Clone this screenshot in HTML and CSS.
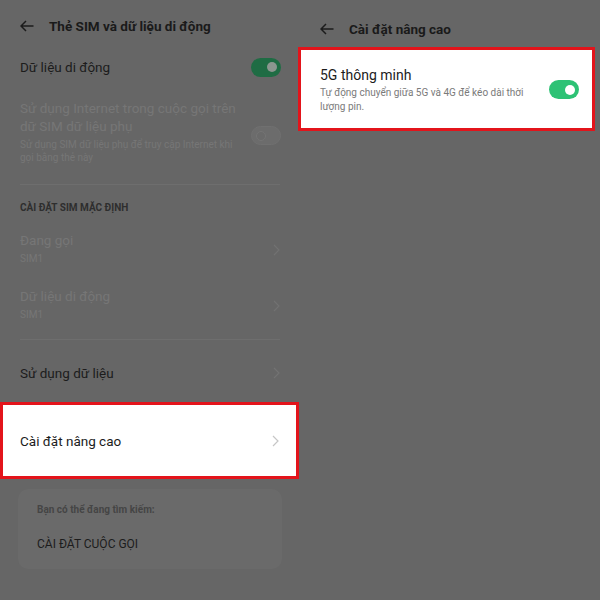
FILE: index.html
```html
<!DOCTYPE html>
<html lang="vi">
<head>
    <meta charset="UTF-8">
    <meta name="viewport" content="width=device-width, initial-scale=1.0">
    <title>Thẻ SIM và dữ liệu di động</title>
    <link rel="stylesheet" href="styles.css">
</head>
<body>
    <div class="screens">
        <!-- Màn hình 1: Thẻ SIM -->
        <div class="screen left">
            <div class="header">
                <svg class="back" width="14" height="12" viewBox="0 0 14 12"><path d="M13.5 6H1M6 1L1 6l5 5" fill="none" stroke="#1c1c1c" stroke-width="1.5"/></svg>
                <span class="title">Thẻ SIM và dữ liệu di động</span>
            </div>

            <div class="row switch-row">
                <span class="label">Dữ liệu di động</span>
                <span class="toggle on-dim"><span class="knob"></span></span>
            </div>

            <div class="row disabled-row">
                <div class="text">
                    <div class="label faded">Sử dụng Internet trong cuộc gọi trên dữ SIM dữ liệu phụ</div>
                    <div class="sub faded">Sử dụng SIM dữ liệu phụ để truy cập Internet khi gọi bằng thẻ này</div>
                </div>
                <span class="toggle off-dim"><span class="knob"></span></span>
            </div>

            <div class="divider"></div>

            <div class="section">CÀI ĐẶT SIM MẶC ĐỊNH</div>

            <div class="row item">
                <div class="text">
                    <div class="label faded">Đang gọi</div>
                    <div class="sub faded">SIM1</div>
                </div>
                <svg class="chev" width="7" height="12" viewBox="0 0 7 12"><path d="M1 1l5 5-5 5" fill="none" stroke="#727272" stroke-width="1.2"/></svg>
            </div>
            <div class="row item">
                <div class="text">
                    <div class="label faded">Dữ liệu di động</div>
                    <div class="sub faded">SIM1</div>
                </div>
                <svg class="chev" width="7" height="12" viewBox="0 0 7 12"><path d="M1 1l5 5-5 5" fill="none" stroke="#727272" stroke-width="1.2"/></svg>
            </div>

            <div class="divider second"></div>

            <div class="row usage">
                <span class="label">Sử dụng dữ liệu</span>
                <svg class="chev" width="7" height="12" viewBox="0 0 7 12"><path d="M1 1l5 5-5 5" fill="none" stroke="#737373" stroke-width="1.2"/></svg>
            </div>

            <div class="row highlight advanced">
                <span class="label">Cài đặt nâng cao</span>
                <svg class="chev" width="7" height="12" viewBox="0 0 7 12"><path d="M1 1l5 5-5 5" fill="none" stroke="#c6c6c6" stroke-width="1.2"/></svg>
            </div>

            <div class="suggest">
                <div class="suggest-title">Bạn có thể đang tìm kiếm:</div>
                <div class="suggest-item">CÀI ĐẶT CUỘC GỌI</div>
            </div>
        </div>

        <!-- Màn hình 2: Cài đặt nâng cao -->
        <div class="screen right">
            <div class="header short">
                <svg class="back" width="14" height="12" viewBox="0 0 14 12"><path d="M13.5 6H1M6 1L1 6l5 5" fill="none" stroke="#1c1c1c" stroke-width="1.5"/></svg>
                <span class="title">Cài đặt nâng cao</span>
            </div>

            <div class="row highlight smart">
                <div class="text">
                    <div class="label">5G thông minh</div>
                    <div class="sub">Tự động chuyển giữa 5G và 4G để kéo dài thời lượng pin.</div>
                </div>
                <span class="toggle on"><span class="knob"></span></span>
            </div>
        </div>
    </div>
</body>
</html>
```

FILE: styles.css
```css
body {
    margin: 0;
    font-family: Roboto, "Noto Sans", Arial, sans-serif;
    background: #666666;
    color: #1c1c1c;
}
.screens {
    display: flex;
    width: 600px;
    height: 600px;
}
.screen {
    display: flex;
    flex-direction: column;
}
.screen.left {
    width: 299px;
}
.screen.right {
    width: 299px;
    margin-left: -1px;
}
.header {
    height: 52px;
    display: flex;
    align-items: center;
    padding-left: 20px;
}
.header.short {
    height: 47px;
    padding-left: 22px;
    margin-top: 5px;
    margin-bottom: -5px;
}
.back {
    margin-right: 15px;
}
.title {
    font-size: 13.5px;
    font-weight: 700;
    color: #1a1a1a;
}
.row {
    display: flex;
    align-items: center;
    justify-content: space-between;
    padding: 0 18px 0 20px;
}
.label {
    font-size: 13.5px;
    line-height: 18px;
    color: #1c1c1c;
}
.sub {
    font-size: 10px;
    line-height: 13px;
}
.faded {
    color: #767676;
}
.switch-row {
    height: 30px;
}
.disabled-row {
    padding-top: 17px;
    padding-bottom: 20px;
}
.disabled-row .text {
    width: 222px;
}
.disabled-row .sub {
    margin-top: 3px;
}
.toggle {
    position: relative;
    width: 30px;
    height: 19px;
    border-radius: 10px;
    flex-shrink: 0;
}
.toggle .knob {
    position: absolute;
    top: 4.5px;
    width: 10px;
    height: 10px;
    border-radius: 50%;
}
.toggle.on-dim {
    background: #1f6c44;
}
.toggle.on-dim .knob {
    right: 4px;
    background: #8c9690;
}
.toggle.off-dim {
    background: #6c6c6c;
    border: 1px solid #707070;
    box-sizing: border-box;
    margin-top: 8px;
}
.toggle.off-dim .knob {
    left: 4px;
    top: 3.5px;
    background: #6a6a6a;
    border: 1px solid #747474;
    box-sizing: border-box;
}
.toggle.on {
    background: #2dc275;
}
.toggle.on .knob {
    right: 4px;
    background: #ffffff;
}
.divider {
    height: 1px;
    margin: 0 19px 0 20px;
    background: #6e6e6e;
}
.section {
    font-size: 10px;
    font-weight: 700;
    line-height: 14px;
    color: #2e2e2e;
    padding: 16px 20px 7px;
}
.item {
    padding-top: 9px;
    padding-bottom: 9px;
}
.item .sub {
    line-height: 20px;
}
.divider.second {
    margin-top: 5px;
}
.usage {
    height: 62px;
    padding-top: 4px;
    box-sizing: border-box;
}
.chev {
    flex-shrink: 0;
    margin-right: 1px;
}
.highlight {
    background: #ffffff;
    border: 3px solid #e3141b;
}
.advanced {
    height: 77px;
    box-sizing: border-box;
    padding-left: 17px;
    padding-right: 16px;
}
.suggest {
    margin: 10px 17px 0 18px;
    height: 80px;
    box-sizing: border-box;
    padding: 14px 19px 0;
    background: #6a6a6a;
    border-radius: 10px;
}
.suggest-title {
    font-size: 10px;
    font-weight: 700;
    line-height: 14px;
    color: #454545;
}
.suggest-item {
    margin-top: 19px;
    font-size: 12px;
    line-height: 16px;
    color: #1c1c1c;
}
.smart {
    margin-right: 2px;
    padding: 15px 13px 14px 19px;
}
.smart .label {
    font-size: 14px;
    line-height: 20px;
}
.smart .sub {
    width: 215px;
    color: #7a7a7a;
    line-height: 14px;
    margin-top: 1px;
}
```
